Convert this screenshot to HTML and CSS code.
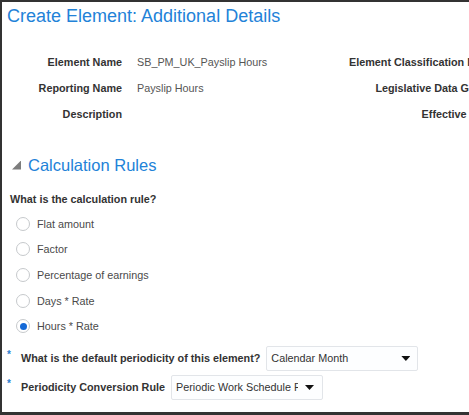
FILE: index.html
```html
<!DOCTYPE html>
<html lang="en">
<head>
<meta charset="utf-8">
<title>Create Element: Additional Details</title>
<link rel="stylesheet" href="styles.css">
</head>
<body>
<div class="frame">
  <h1 class="title">Create Element: Additional Details</h1>
  <div class="details">
    <div class="lbl">Element Name</div>
    <div class="val">SB_PM_UK_Payslip Hours</div>
    <div class="lbl2">Element Classification Name</div>
    <div class="lbl">Reporting Name</div>
    <div class="val">Payslip Hours</div>
    <div class="lbl2">Legislative Data Group</div>
    <div class="lbl">Description</div>
    <div class="val"></div>
    <div class="lbl2">Effective Date</div>
  </div>
  <h2 class="sec-title"><span class="disclosure"></span>Calculation Rules</h2>
  <div class="question">What is the calculation rule?</div>
  <div class="radios">
    <div class="radio"><span class="circle"></span><span class="rlabel">Flat amount</span></div>
    <div class="radio"><span class="circle"></span><span class="rlabel">Factor</span></div>
    <div class="radio"><span class="circle"></span><span class="rlabel">Percentage of earnings</span></div>
    <div class="radio"><span class="circle"></span><span class="rlabel">Days * Rate</span></div>
    <div class="radio"><span class="circle checked"></span><span class="rlabel">Hours * Rate</span></div>
  </div>
  <div class="field-row first">
    <span class="req">*</span>
    <span class="flabel">What is the default periodicity of this element?</span>
    <div class="select sel1"><span class="stext">Calendar Month</span><span class="arrow"></span></div>
  </div>
  <div class="field-row second">
    <span class="req">*</span>
    <span class="flabel">Periodicity Conversion Rule</span>
    <div class="select sel2"><span class="stext">Periodic Work Schedule Rate</span><span class="arrow"></span></div>
  </div>
</div>
</body>
</html>
```
FILE: styles.css
```css
html, body {
  margin: 0;
  padding: 0;
  background: #fff;
}
body {
  font-family: "Liberation Sans", Arial, sans-serif;
}
.frame {
  width: 469px;
  height: 415px;
  box-sizing: border-box;
  border-top: 2px solid #333;
  border-left: 2px solid #333;
  border-bottom: 3px solid #333;
  overflow: hidden;
  background: #fff;
}
.title {
  margin: 0;
  padding: 3px 0 0 5px;
  font-size: 18px;
  line-height: 22px;
  font-weight: normal;
  color: #2282d8;
  white-space: nowrap;
}
.details {
  display: grid;
  grid-template-columns: 120px 227px 144px;
  grid-auto-rows: 26px;
  align-items: center;
  margin-top: 22px;
  font-size: 10.8px;
  white-space: nowrap;
}
.lbl {
  text-align: right;
  font-weight: bold;
  color: #333;
}
.val {
  padding-left: 15px;
  color: #555;
}
.lbl2 {
  text-align: right;
  font-weight: bold;
  color: #333;
}
.sec-title {
  margin: 27px 0 0 0;
  padding-left: 10px;
  display: flex;
  align-items: center;
  font-size: 16.5px;
  line-height: 22px;
  font-weight: normal;
  color: #2282d8;
}
.disclosure {
  width: 9px;
  height: 9px;
  margin-right: 7px;
  background: #7d7d7d;
  clip-path: polygon(100% 0, 100% 100%, 0 100%);
}
.question {
  margin-top: 15px;
  padding-left: 8px;
  font-size: 10.8px;
  line-height: 16px;
  font-weight: bold;
  color: #333;
}
.radios {
  margin-top: 4px;
}
.radio {
  height: 25.6px;
  display: flex;
  align-items: center;
  padding-left: 14px;
}
.circle {
  width: 14px;
  height: 14px;
  box-sizing: border-box;
  border: 1px solid #c6c9cc;
  border-radius: 50%;
  background: #fff;
  display: flex;
  align-items: center;
  justify-content: center;
}
.circle.checked::after {
  content: "";
  width: 7px;
  height: 7px;
  border-radius: 50%;
  background: #1368d6;
}
.rlabel {
  margin-left: 7px;
  font-size: 10.8px;
  color: #4a4a4a;
}
.field-row {
  display: flex;
  align-items: center;
  height: 25px;
  padding-left: 5px;
  font-size: 10.8px;
}
.field-row.first {
  margin-top: 7px;
}
.field-row.second {
  margin-top: 4px;
}
.req {
  width: 14px;
  align-self: flex-start;
  margin-top: 4px;
  color: #2a7fd0;
  font-weight: bold;
  font-size: 10px;
  line-height: 10px;
}
.flabel {
  font-weight: bold;
  color: #333;
  white-space: nowrap;
  margin-right: 6px;
}
.select {
  height: 25px;
  box-sizing: border-box;
  border: 1px solid #e2e5e9;
  border-radius: 2px;
  background: #fdfeff;
  display: flex;
  align-items: center;
  padding: 0 7px 0 4px;
  flex-shrink: 0;
}
.sel1 {
  width: 152px;
}
.sel2 {
  width: 152px;
  padding-right: 8px;
}
.stext {
  flex: 1;
  overflow: hidden;
  white-space: nowrap;
  color: #333;
}
.sel2 .stext {
  margin-right: 7px;
}
.arrow {
  width: 9px;
  height: 5px;
  background: #111;
  clip-path: polygon(0 0, 100% 0, 50% 100%);
  flex-shrink: 0;
}
```
